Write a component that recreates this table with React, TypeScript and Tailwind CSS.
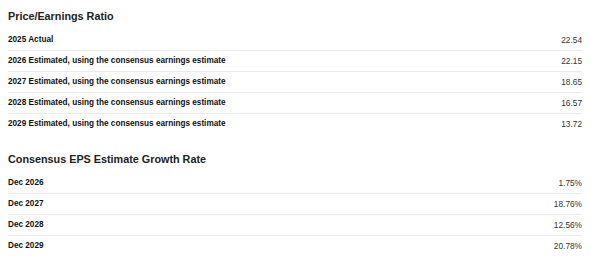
const peRows = [
  { label: '2025 Actual', value: '22.54' },
  { label: '2026 Estimated, using the consensus earnings estimate', value: '22.15' },
  { label: '2027 Estimated, using the consensus earnings estimate', value: '18.65' },
  { label: '2028 Estimated, using the consensus earnings estimate', value: '16.57' },
  { label: '2029 Estimated, using the consensus earnings estimate', value: '13.72' },
];

const growthRows = [
  { label: 'Dec 2026', value: '1.75%' },
  { label: 'Dec 2027', value: '18.76%' },
  { label: 'Dec 2028', value: '12.56%' },
  { label: 'Dec 2029', value: '20.78%' },
];

function Section({ title, rows, className }: { title: string; rows: { label: string; value: string }[]; className?: string }) {
  return (
    <section className={className}>
      <h2 className="h-[18px] leading-[18px] text-[10.8px] font-bold text-[#222] mb-[5px]">{title}</h2>
      <div>
        {rows.map((r, i) => (
          <div
            key={r.label}
            className={`h-[21px] flex items-center justify-between ${i < rows.length - 1 ? 'border-b border-[#ebebeb]' : ''}`}
          >
            <span className="text-[8.2px] font-bold text-[#111]">{r.label}</span>
            <span className="text-[8.3px] text-[#333]">{r.value}</span>
          </div>
        ))}
      </div>
    </section>
  );
}

export default function App() {
  return (
    <div
      className="w-[591px] h-[259px] bg-white pl-2 pr-[9px] pt-[7px]"
      style={{ fontFamily: '"Liberation Sans", Arial, sans-serif' }}
    >
      <Section title="Price/Earnings Ratio" rows={peRows} />
      <Section title="Consensus EPS Estimate Growth Rate" rows={growthRows} className="mt-[15px]" />
    </div>
  );
}
